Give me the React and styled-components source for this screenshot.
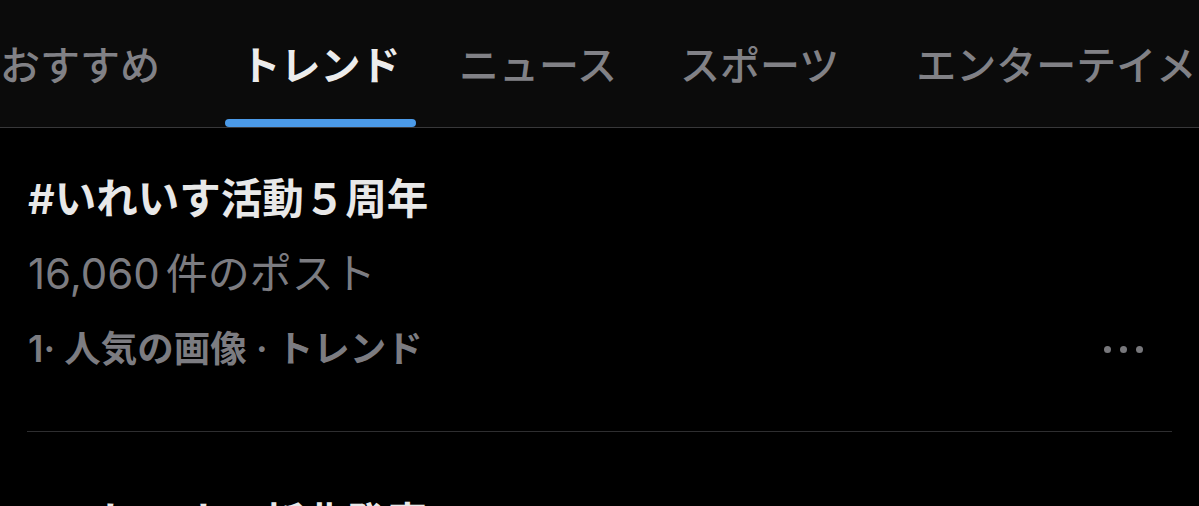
import styled, { createGlobalStyle } from "styled-components";

const tabs = [
  { label: "おすすめ", lead: 0 },
  { label: "トレンド", lead: 65, active: true },
  { label: "ニュース", lead: 43 },
  { label: "スポーツ", lead: 63 },
  { label: "エンターテイメント", lead: 77 },
];

const trends = [
  {
    title: "#いれいす活動５周年",
    count: "16,060",
    meta: "1· 人気の画像 · トレンド",
  },
  {
    title: "#いれいすの新曲発表",
    count: "8,412",
    meta: "2· 人気の画像 · トレンド",
  },
];

function App() {
  return (
    <>
      <GlobalStyle />
      <Page>
        <Header>
          <TabList>
            {tabs.map((tab) => (
              <Tab key={tab.label} $lead={tab.lead}>
                <TabLabel $active={tab.active}>{tab.label}</TabLabel>
                {tab.active && <Indicator />}
              </Tab>
            ))}
          </TabList>
        </Header>
        <List>
          {trends.map((trend) => (
            <Item key={trend.title}>
              <Title>{trend.title}</Title>
              <Count>
                {trend.count}
                <span>件のポスト</span>
              </Count>
              <MetaRow>
                <Meta>{trend.meta}</Meta>
                <More aria-label="more">
                  <Dot />
                  <Dot />
                  <Dot />
                </More>
              </MetaRow>
            </Item>
          ))}
        </List>
      </Page>
    </>
  );
}

const GlobalStyle = createGlobalStyle`
  html, body {
    margin: 0;
    background: #000;
    overflow: hidden;
  }
  body {
    font-family: Inter, "Noto Sans CJK JP", sans-serif;
  }
`;

const Page = styled.div`
  width: 1199px;
  height: 506px;
  overflow: hidden;
  background: #000;
`;

const Header = styled.header`
  background: #0b0b0b;
  border-bottom: 1px solid #38383a;
`;

const TabList = styled.nav`
  display: flex;
  height: 127px;
  white-space: nowrap;
`;

const Tab = styled.div`
  display: flex;
  flex-direction: column;
  align-items: center;
  flex-shrink: 0;
  margin-left: ${(p) => p.$lead}px;
`;

const TabLabel = styled.span`
  margin-top: 43px;
  font-family: "Noto Sans CJK JP", sans-serif;
  font-size: 40px;
  line-height: 40px;
  font-weight: ${(p) => (p.$active ? 600 : 500)};
  color: ${(p) => (p.$active ? "#ececec" : "#818186")};
`;

const Indicator = styled.div`
  margin-top: auto;
  width: 191px;
  height: 8px;
  border-radius: 4px;
  background: #4b9ae8;
`;

const List = styled.div`
  padding: 0 27px;
`;

const Item = styled.div`
  padding: 66px 0 57px 1px;
  border-bottom: 1px solid #2e2e30;

  &:first-child {
    padding-top: 46px;
  }
`;

const Title = styled.div`
  font-size: 41.5px;
  line-height: 50px;
  font-weight: 600;
  color: #e8e8e8;
  white-space: nowrap;
`;

const Count = styled.div`
  margin-top: 25px;
  font-size: 42px;
  line-height: 50px;
  font-weight: 400;
  color: #7c7c81;

  span {
    margin-left: 6px;
  }
`;

const MetaRow = styled.div`
  margin-top: 25px;
  display: flex;
  align-items: center;
  justify-content: space-between;
`;

const Meta = styled.div`
  font-size: 36.5px;
  line-height: 50px;
  font-weight: 600;
  color: #7c7c81;
`;

const More = styled.div`
  display: flex;
  gap: 9px;
  margin-right: 29px;
`;

const Dot = styled.span`
  width: 7px;
  height: 7px;
  border-radius: 50%;
  background: #77777b;
`;

export default App;
